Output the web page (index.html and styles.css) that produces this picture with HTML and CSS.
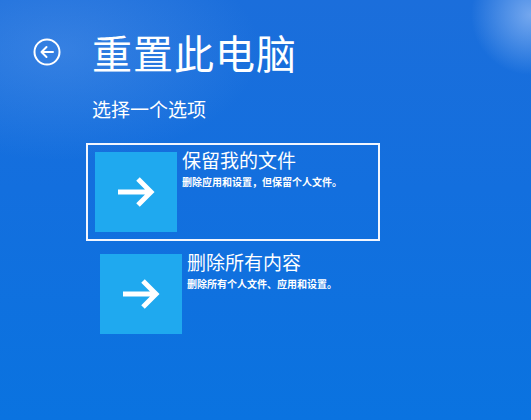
FILE: index.html
```html
<!DOCTYPE html>
<html lang="zh-CN">
<head>
<meta charset="utf-8">
<link rel="stylesheet" href="styles.css">
</head>
<body>
<div class="screen">
  <header class="header">
    <svg class="back" viewBox="0 0 28 28" width="28" height="28" aria-hidden="true">
      <circle cx="14" cy="14" r="12.5" fill="none" stroke="#fff" stroke-width="2"/>
      <path d="M20 14H8.5M13.5 9L8.5 14L13.5 19" fill="none" stroke="#fff" stroke-width="2" stroke-linecap="round" stroke-linejoin="round"/>
    </svg>
    <h1 class="title">重置此电脑</h1>
  </header>
  <p class="subtitle">选择一个选项</p>
  <div class="options">
    <div class="option selected">
      <div class="tile">
        <svg viewBox="0 0 40 32" width="40" height="32" aria-hidden="true">
          <path d="M2 16H35M22 3L35 16L22 29" fill="none" stroke="#fff" stroke-width="5" stroke-linejoin="miter"/>
        </svg>
      </div>
      <div class="text">
        <div class="opt-title">保留我的文件</div>
        <div class="opt-desc">删除应用和设置，但保留个人文件。</div>
      </div>
    </div>
    <div class="option second">
      <div class="tile">
        <svg viewBox="0 0 40 32" width="40" height="32" aria-hidden="true">
          <path d="M2 16H35M22 3L35 16L22 29" fill="none" stroke="#fff" stroke-width="5" stroke-linejoin="miter"/>
        </svg>
      </div>
      <div class="text">
        <div class="opt-title">删除所有内容</div>
        <div class="opt-desc">删除所有个人文件、应用和设置。</div>
      </div>
    </div>
  </div>
</div>
</body>
</html>
```
FILE: styles.css
```css
html, body {
  margin: 0;
  padding: 0;
}
body {
  width: 531px;
  height: 420px;
  overflow: hidden;
  font-family: "Noto Sans CJK SC", "Noto Sans", sans-serif;
  color: #fff;
  background:
    radial-gradient(ellipse 200px 110px at 60px 50px, rgba(120,170,240,0.3), rgba(120,170,240,0) 100%),
    radial-gradient(ellipse 60px 60px at 531px 15px, rgba(190,215,255,0.55), rgba(190,215,255,0) 100%),
    linear-gradient(180deg, #1b6edb 0%, #136fde 45%, #0a73e0 100%);
}
.screen {
  padding: 28px 0 0 33px;
}
.header {
  display: flex;
  align-items: center;
  height: 48px;
}
.back {
  display: block;
  margin-right: 31px;
}
.title {
  margin: 0;
  font-size: 40px;
  font-weight: 400;
  line-height: 48px;
  letter-spacing: 1px;
}
.subtitle {
  margin: 20px 0 0 59px;
  font-size: 19px;
  line-height: 26px;
}
.options {
  margin: 21px 0 0 53px;
  display: flex;
  flex-direction: column;
  gap: 11px;
}
.option {
  display: flex;
  width: 276px;
  padding: 7px;
  border: 2px solid transparent;
}
.option.selected {
  border-color: #f2f6ff;
}
.option.second {
  margin-left: 5px;
  padding-top: 0;
}
.tile {
  width: 82px;
  height: 80px;
  background: #1fa9ef;
  display: flex;
  align-items: center;
  justify-content: center;
  flex: none;
}
.text {
  margin-left: 5px;
}
.opt-title {
  font-size: 19px;
  line-height: 24px;
  margin-top: -4px;
}
.opt-desc {
  font-size: 10px;
  font-weight: 700;
  line-height: 14px;
  margin-top: 3px;
}
```
